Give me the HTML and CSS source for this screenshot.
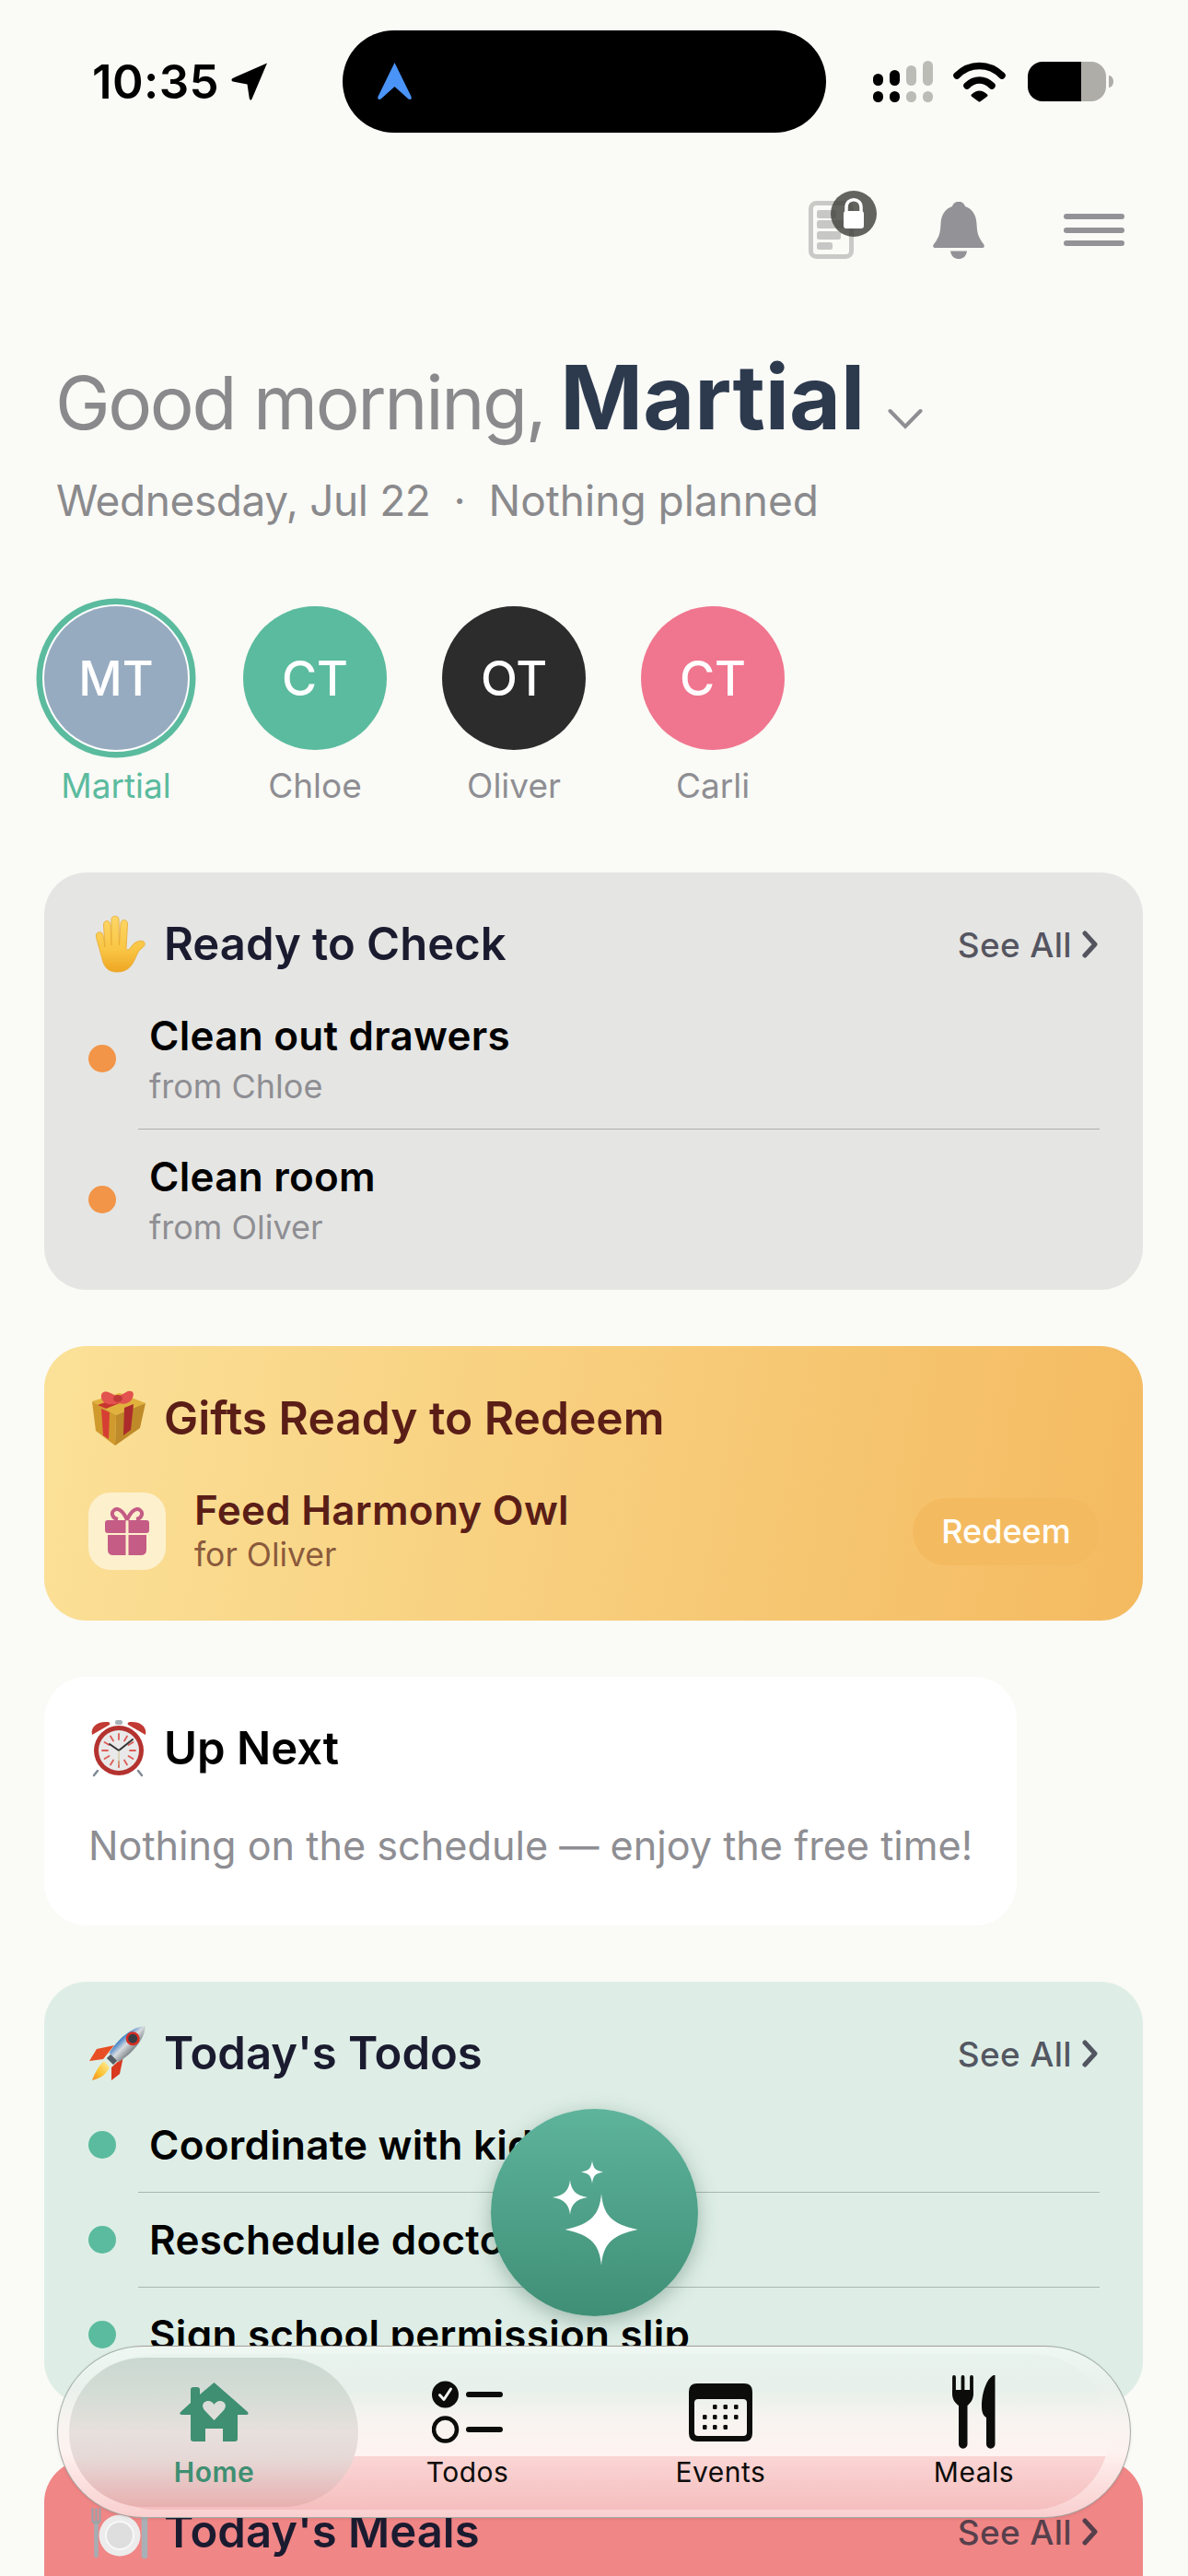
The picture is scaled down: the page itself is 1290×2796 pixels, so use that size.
FILE: index.html
```html
<!DOCTYPE html>
<html>

<head>
    <title>Home</title>
    <link rel="stylesheet" href="styles.css">
</head>

<body>
    <div class="screen">
        <div class="status">
            <div class="clock">
                <span>10:35</span>
                <svg width="41" height="41" viewBox="0 0 41 41"><path d="M39 0.6 L22.5 39.5 Q21 42 19.8 39 L17.5 23.5 L1.8 20.5 Q-0.8 19 1.5 17 Z" fill="#000"/></svg>
            </div>
            <div class="island">
                <svg width="37" height="41" viewBox="0 0 37 41"><path d="M18.5 0 L36.6 37 Q37.5 41 33.5 39.5 L18.5 26 L3.5 39.5 Q-0.5 41 0.4 37 Z" fill="#4a94f8"/></svg>
            </div>
            <div class="sysicons">
                <svg width="65" height="45" viewBox="0 0 65 45">
                    <rect x="0" y="14" width="11" height="13" rx="5.5"/>
                    <rect x="18" y="10" width="11" height="17" rx="5.5"/>
                    <rect x="36" y="5" width="11" height="22" rx="5.5" fill="#bcbcb6"/>
                    <rect x="54" y="0" width="11" height="27" rx="5.5" fill="#bcbcb6"/>
                    <rect x="0" y="33" width="11" height="12" rx="5.5"/>
                    <rect x="18" y="33" width="11" height="12" rx="5.5"/>
                    <rect x="36" y="33" width="11" height="12" rx="5.5" fill="#bcbcb6"/>
                    <rect x="54" y="33" width="11" height="12" rx="5.5" fill="#bcbcb6"/>
                </svg>
                <svg class="wifi" width="57" height="44" viewBox="0 0 57 44">
                    <path d="M4 15 C18 1 39 1 53 15" fill="none" stroke="#000" stroke-width="7.5" stroke-linecap="round"/>
                    <path d="M15 26 C23 18 34 18 42 26" fill="none" stroke="#000" stroke-width="7.5" stroke-linecap="round"/>
                    <path d="M21 36.5 Q28.5 29.5 36 36.5 L28.5 42 Z" stroke="#000" stroke-width="3" stroke-linejoin="round"/>
                </svg>
                <svg class="battery" width="93" height="43" viewBox="0 0 93 43">
                    <path d="M16 0 H58 V43 H16 A16 16 0 0 1 0 27 V16 A16 16 0 0 1 16 0Z"/>
                    <path d="M58 0 H69 A16 16 0 0 1 85 16 V27 A16 16 0 0 1 69 43 H58Z" fill="#aeada8"/>
                    <path d="M88 15 C91 15 93 18 93 21.5 C93 25 91 28 88 28Z" fill="#aeada8"/>
                </svg>
            </div>
        </div>

        <div class="topbar">
            <div class="doc">
                <svg width="49" height="63" viewBox="0 0 49 63">
                    <rect x="2.5" y="2.5" width="44" height="58" rx="6" fill="none" stroke="#c9c9c7" stroke-width="5"/>
                    <rect x="9" y="10" width="21" height="9" rx="2.5" fill="#c7c7c5"/>
                    <rect x="9" y="21" width="30" height="9" rx="2.5" fill="#c7c7c5"/>
                    <rect x="9" y="33" width="26" height="9" rx="2.5" fill="#c7c7c5"/>
                    <rect x="9" y="45" width="17" height="8" rx="2.5" fill="#c7c7c5"/>
                </svg>
                <div class="lock">
                    <svg width="50" height="50" viewBox="0 0 50 50">
                        <path d="M17 23 V18 C17 7 33 7 33 18 V23" fill="none" stroke="#fff" stroke-width="3.5"/>
                        <rect x="14" y="22" width="22" height="19" rx="3" fill="#fff"/>
                    </svg>
                </div>
            </div>
            <svg class="bell" width="56" height="62" viewBox="0 0 56 62">
                <path d="M28 0 C24 0 22 2 21 5 C13 8 9 14 8.5 24 C8 34 7 38 1 46 C-1 49 1 50 3 50 L53 50 C55 50 57 49 55 46 C49 38 48 34 47.5 24 C47 14 43 8 35 5 C34 2 32 0 28 0Z" fill="#929297"/>
                <path d="M19 53.5 L37 53.5 C36 60 32 62 28 62 C24 62 20 60 19 53.5Z" fill="#929297"/>
            </svg>
            <div class="menu"><span></span><span></span><span></span></div>
        </div>

        <div class="greeting">
            <span class="hello">Good morning,</span>
            <span class="name">Martial</span>
            <svg class="caret" width="38" height="23" viewBox="0 0 38 23"><path d="M2.5 3 L19 20 L35.5 3" fill="none" stroke="#8e8e93" stroke-width="4" stroke-linecap="round"/></svg>
        </div>
        <div class="subline"><span class="date">Wednesday, Jul 22</span> <span class="mid">·</span> Nothing planned</div>

        <div class="people">
            <div class="person active">
                <div class="avatar blue">MT</div>
                <div class="person-name">Martial</div>
            </div>
            <div class="person">
                <div class="avatar green">CT</div>
                <div class="person-name">Chloe</div>
            </div>
            <div class="person">
                <div class="avatar dark">OT</div>
                <div class="person-name">Oliver</div>
            </div>
            <div class="person">
                <div class="avatar pink">CT</div>
                <div class="person-name">Carli</div>
            </div>
        </div>

        <div class="cards">
            <section class="card check">
                <div class="card-head">
                    <svg class="emoji" width="62" height="62" viewBox="0 0 62 62">
                        <defs><linearGradient id="hand" x1="0" y1="0" x2="0" y2="1"><stop offset="0" stop-color="#fcd768"/><stop offset="0.6" stop-color="#f9c544"/><stop offset="1" stop-color="#eea622"/></linearGradient></defs>
                        <path transform="translate(7 0)" d="M3 18 C6 17 8 19 8.5 24 L10 34 L8.5 10 C8.5 4 15.5 4 16 10 L17 32 L17 4 C17 -1 25 -1 25 4 L25.5 32 L27 9 C27 3 34.5 3 34.5 9 L33 36 C35 38 37 36 39 33 C42 28 49 26 52 28 C55 31 52 34 49 36 C46 38 45 42 42 48 C38 57 32 61 23 61 C14 61 9 56 7 47 C5 39 2 30 0.5 23 C0 20 1 18.5 3 18Z" fill="url(#hand)" stroke="#e8a92e" stroke-width="0.8"/>
                    </svg>
                    <h2>Ready to Check</h2>
                    <a class="see-all">See All <svg width="17" height="30" viewBox="0 0 17 30"><path d="M3 3 L14 15 L3 27" fill="none" stroke="currentColor" stroke-width="5" stroke-linecap="round" stroke-linejoin="round"/></svg></a>
                </div>
                <div class="row tall">
                    <span class="dot orange"></span>
                    <div>
                        <div class="row-title">Clean out drawers</div>
                        <div class="row-sub">from Chloe</div>
                    </div>
                </div>
                <div class="rule"></div>
                <div class="row tall">
                    <span class="dot orange"></span>
                    <div>
                        <div class="row-title">Clean room</div>
                        <div class="row-sub">from Oliver</div>
                    </div>
                </div>
            </section>

            <section class="card gifts">
                <div class="card-head">
                    <svg class="emoji" width="62" height="62" viewBox="0 0 62 62">
                        <path d="M3 13 L33 4 L61 15 L29 28Z" fill="#e0b13c"/>
                        <path d="M3 13 L29 28 L28 61 L7 45Z" fill="#d09a2d"/>
                        <path d="M29 28 L61 15 L55 42 L28 61Z" fill="#bf8a29"/>
                        <path d="M9 17 L18 21 L43 11 L34 8Z" fill="#c8352f"/>
                        <path d="M13 21 L22 25 L21 54 L15 50Z" fill="#d63e34"/>
                        <path d="M38 20 L48 16 L45 44 L37 50Z" fill="#ac2b2b"/>
                        <path d="M32 15 C24 18 14 16 13 9 C12 2 18 1 23 4 L31 8 L40 3 C45 0 50 3 47 9 C45 15 38 17 32 15Z" fill="#e2524e"/>
                        <ellipse cx="31" cy="10" rx="5" ry="4" fill="#c23a38"/>
                    </svg>
                    <h2>Gifts Ready to Redeem</h2>
                </div>
                <div class="gift-row">
                    <div class="gift-tile">
                        <svg width="48" height="52" viewBox="0 0 48 52">
                            <path d="M24 14 C20 4 14 0 10 3 C6 6 8 12 14 13 M24 14 C28 4 34 0 38 3 C42 6 40 12 34 13" fill="none" stroke="#c45c85" stroke-width="4"/>
                            <path d="M3 14 H22.5 V28 H3 Q0 28 0 25 V17 Q0 14 3 14Z M25.5 14 H45 Q48 14 48 17 V25 Q48 28 45 28 H25.5Z" fill="#c45c85"/>
                            <path d="M3 30 H22.5 V52 H9 Q3 52 3 46Z M25.5 30 H45 V46 Q45 52 39 52 H25.5Z" fill="#c45c85"/>
                        </svg>
                    </div>
                    <div class="gift-text">
                        <div class="gift-title">Feed Harmony Owl</div>
                        <div class="gift-sub">for Oliver</div>
                    </div>
                    <div class="redeem">Redeem</div>
                </div>
            </section>

            <section class="card next">
                <div class="card-head">
                    <svg class="emoji" width="62" height="62" viewBox="0 0 62 62">
                        <path d="M9 55 L5 60 M53 55 L57 60" stroke="#7f8a94" stroke-width="2.5" stroke-linecap="round"/>
                        <path d="M3 16 C1 7 9 1 20 2 C22 2 23 4 22 5 Z" fill="#c23a34"/>
                        <path d="M61 16 C63 7 55 1 44 2 C42 2 41 4 42 5 Z" fill="#c23a34"/>
                        <rect x="28" y="0" width="8" height="5" rx="2" fill="#a7b2ba"/>
                        <circle cx="32" cy="33" r="27" fill="#b4322f"/>
                        <circle cx="32" cy="33" r="22" fill="#e9e9e9"/>
                        <g stroke="#dd5c55" stroke-width="1.8" stroke-linecap="round">
                            <path d="M32 15 V21 M32 45 V51 M14 33 H20 M44 33 H50 M23 17.500 L26 22.500 M41 17.500 L38 22.500 M16.500 24 L21.500 27 M47.500 24 L42.500 27 M16.500 42 L21.500 39 M47.500 42 L42.500 39 M23 48.500 L26 43.500 M41 48.500 L38 43.500"/>
                        </g>
                        <path d="M32 33 L22 26 M32 33 L47 21" stroke="#333" stroke-width="2" stroke-linecap="round"/>
                        <path d="M32 33 V49" stroke="#c9bd8e" stroke-width="1"/>
                    </svg>
                    <h2 class="black">Up Next</h2>
                </div>
                <p class="empty">Nothing on the schedule — enjoy the free time!</p>
            </section>

            <section class="card todos">
                <div class="card-head">
                    <svg class="emoji" width="62" height="62" viewBox="0 0 62 62">
                        <defs>
                            <linearGradient id="hull" x1="0" y1="0" x2="1" y2="0"><stop offset="0" stop-color="#3f7fc4"/><stop offset="0.45" stop-color="#d8dce0"/><stop offset="1" stop-color="#7d8488"/></linearGradient>
                            <linearGradient id="fire" x1="1" y1="0" x2="0" y2="1"><stop offset="0" stop-color="#fff1a8"/><stop offset="0.6" stop-color="#fbc030"/><stop offset="1" stop-color="#f08a20"/></linearGradient>
                        </defs>
                        <path d="M27 22 L8 26 L0 39 L15 37Z" fill="#e84f25"/>
                        <path d="M37 34 L33 53 L24 60 L24 46Z" fill="#d8391f"/>
                        <path d="M16 39 C10 44 6 52 3 60 C12 58 19 53 22 46Z" fill="url(#fire)"/>
                        <g transform="rotate(45 38 24)">
                            <path d="M38 -8 C48 2 49 24 45 40 H31 C27 24 28 2 38 -8Z" fill="url(#hull)"/>
                            <rect x="33" y="40" width="10" height="6" fill="#555e66"/>
                            <circle cx="38" cy="11" r="7.5" fill="#d82d22"/>
                            <circle cx="38" cy="11" r="5" fill="#3a3c44"/>
                        </g>
                    </svg>
                    <h2>Today's Todos</h2>
                    <a class="see-all">See All <svg width="17" height="30" viewBox="0 0 17 30"><path d="M3 3 L14 15 L3 27" fill="none" stroke="currentColor" stroke-width="5" stroke-linecap="round" stroke-linejoin="round"/></svg></a>
                </div>
                <div class="row">
                    <span class="dot mint"></span>
                    <div class="row-title">Coordinate with kids</div>
                </div>
                <div class="rule mintline"></div>
                <div class="row">
                    <span class="dot mint"></span>
                    <div class="row-title">Reschedule doctor</div>
                </div>
                <div class="rule mintline"></div>
                <div class="row">
                    <span class="dot mint"></span>
                    <div class="row-title">Sign school permission slip</div>
                </div>
            </section>

            <section class="card meals">
                <div class="card-head">
                    <svg class="emoji" width="64" height="62" viewBox="0 0 64 62">
                        <circle cx="33" cy="35" r="22.500" fill="#ececec"/>
                        <circle cx="33" cy="35" r="15" fill="#dedede" stroke="#f8f8f8" stroke-width="2"/>
                        <path d="M3.500 6 V20 M7.500 6 V20 M11.500 6 V20" stroke="#9aa3a8" stroke-width="2.200" stroke-linecap="round"/>
                        <path d="M3.500 19 C3.500 25 11.500 25 11.500 19 Z" fill="#9aa3a8"/>
                        <path d="M7.500 24 V57" stroke="#a4adb2" stroke-width="4.500" stroke-linecap="round"/>
                        <path d="M60 6 V57" stroke="#a9b0b5" stroke-width="6.500" stroke-linecap="round"/>
                    </svg>
                    <h2>Today's Meals</h2>
                    <a class="see-all">See All <svg width="17" height="30" viewBox="0 0 17 30"><path d="M3 3 L14 15 L3 27" fill="none" stroke="currentColor" stroke-width="5" stroke-linecap="round" stroke-linejoin="round"/></svg></a>
                </div>
            </section>
        </div>

        <button class="fab">
            <svg width="120" height="125" viewBox="0 0 120 125">
                <path d="M78 40 C80 62 88 73 117.500 79 C88 85 80 96 78 118 C76 96 68 85 38.500 79 C68 73 76 62 78 40Z" fill="#fff"/>
                <path d="M44 25 C45 36 50 42 63 44 C50 46 45 52 44 63 C43 52 38 46 25 44 C38 42 43 36 44 25Z" fill="#fff"/>
                <path d="M68 4 C69 12 71 15 80 16.500 C71 18 69 21 68 29 C67 21 65 18 56 16.500 C65 15 67 12 68 4Z" fill="#fff"/>
            </svg>
        </button>

        <nav class="tabbar">
            <div class="tab active">
                <div class="tab-icon">
                    <svg width="75" height="64" viewBox="0 0 75 64"><path fill-rule="evenodd" d="M37.500 0 L74 32 Q76 35 72 35 L63 35 L63 61 Q63 64 60 64 L47 64 L47 50 L28 50 L28 64 L15 64 Q12 64 12 61 L12 35 L3 35 Q-1 35 1 32 L12 22 L12 8 Q12 5 15 5 L19 5 Q22 5 22 8 L22 13 Z M37.500 41 L27 30 C23 25 26 20 31 20 C34 20 36.500 22 37.500 24 C38.500 22 41 20 44 20 C49 20 52 25 48 30 Z" fill="#3f8f72"/></svg>
                </div>
                <div class="tab-label">Home</div>
            </div>
            <div class="tab">
                <div class="tab-icon">
                    <svg width="77" height="68" viewBox="0 0 77 68">
                        <circle cx="14.500" cy="15" r="14.500" fill="#0c0c0a"/>
                        <path d="M8.500 15.500 L13 20.500 L20.500 9" fill="none" stroke="#f2f6f2" stroke-width="3" stroke-linecap="round" stroke-linejoin="round"/>
                        <circle cx="14.500" cy="53" r="12.500" fill="none" stroke="#0c0c0a" stroke-width="4.500"/>
                        <path d="M40 15 H74 M40 53 H74" stroke="#0c0c0a" stroke-width="6" stroke-linecap="round"/>
                    </svg>
                </div>
                <div class="tab-label">Todos</div>
            </div>
            <div class="tab">
                <div class="tab-icon">
                    <svg width="69" height="63" viewBox="0 0 69 63">
                        <path fill-rule="evenodd" d="M9 0 H60 Q69 0 69 9 V54 Q69 63 60 63 H9 Q0 63 0 54 V9 Q0 0 9 0Z M10 17 Q6 17 6 21 V53 Q6 57 10 57 H59 Q63 57 63 53 V21 Q63 17 59 17Z" fill="#0c0c0a"/>
                        <g fill="#0c0c0a">
                            <rect x="26" y="23" width="4.500" height="5" rx="1.200"/><rect x="37.500" y="23" width="4.500" height="5" rx="1.200"/><rect x="49" y="23" width="4.500" height="5" rx="1.200"/>
                            <rect x="15" y="34" width="4.500" height="5" rx="1.200"/><rect x="26" y="34" width="4.500" height="5" rx="1.200"/><rect x="37.500" y="34" width="4.500" height="5" rx="1.200"/><rect x="49" y="34" width="4.500" height="5" rx="1.200"/>
                            <rect x="15" y="45" width="4.500" height="5" rx="1.200"/><rect x="26" y="45" width="4.500" height="5" rx="1.200"/><rect x="37.500" y="45" width="4.500" height="5" rx="1.200"/>
                        </g>
                    </svg>
                </div>
                <div class="tab-label">Events</div>
            </div>
            <div class="tab">
                <div class="tab-icon">
                    <svg width="48" height="80" viewBox="0 0 48 80">
                        <path d="M2 2 V20 M11.500 2 V20 M21 2 V20" stroke="#0c0c0a" stroke-width="3.800" stroke-linecap="round"/>
                        <path d="M0 16 H23 V20 C23 27 19 31 16.500 33 V75 A4.750 4.750 0 0 1 7 75 V33 C4 31 0 27 0 20Z" fill="#0c0c0a"/>
                        <path d="M46.500 0 V75 A4.750 4.750 0 0 1 37 75 V46 C34 44 32 41 32 34 C32 18 38 3 45 0 Z" fill="#0c0c0a"/>
                    </svg>
                </div>
                <div class="tab-label">Meals</div>
            </div>
        </nav>
    </div>
</body>

</html>
```

FILE: styles.css
```css
* {
    box-sizing: border-box;
}

html,
body {
    margin: 0;
    padding: 0;
}

body {
    font-family: Inter, "Noto Sans", sans-serif;
    background-color: #fafaf6;
}

.screen {
    position: relative;
    width: 1290px;
    height: 2796px;
    overflow: hidden;
    background-color: #fafaf6;
}

/* status bar */
.status {
    display: flex;
    align-items: center;
    height: 111px;
    margin-top: 33px;
    padding-left: 100px;
}

.clock {
    display: flex;
    align-items: center;
    gap: 13px;
    width: 194px;
    margin-right: 78px;
    font-size: 51px;
    font-weight: 600;
    color: #000;
    letter-spacing: 0.4px;
}

.island {
    display: flex;
    align-items: center;
    width: 525px;
    height: 111px;
    padding-left: 38px;
    border-radius: 56px;
    background-color: #000;
    margin-right: 51px;
}

.sysicons {
    display: flex;
    align-items: center;
}

.wifi {
    margin-left: 22px;
}

.battery {
    margin-left: 24px;
}

/* top icons */
.topbar {
    display: flex;
    justify-content: flex-end;
    align-items: center;
    height: 63px;
    margin-top: 74px;
    padding-right: 69px;
}

.doc {
    position: relative;
    width: 49px;
    height: 63px;
    margin-right: 86px;
}

.doc svg {
    display: block;
}

.lock {
    position: absolute;
    left: 24px;
    top: -11px;
    width: 50px;
    height: 50px;
    border-radius: 50%;
    background-color: rgba(66, 66, 62, 0.82);
}

.bell {
    margin-right: 86px;
}

.menu {
    display: flex;
    flex-direction: column;
    gap: 8.5px;
    width: 66px;
}

.menu span {
    height: 6px;
    border-radius: 3px;
    background-color: #929297;
}

/* greeting */
.greeting {
    display: flex;
    align-items: baseline;
    margin-top: 95px;
    padding-left: 60px;
    line-height: 110px;
}

.hello {
    font-size: 80px;
    color: #8a8a8d;
    letter-spacing: -2.4px;
}

.name {
    margin-left: 17px;
    font-size: 96.5px;
    font-weight: 700;
    color: #2d3a4e;
}

.caret {
    margin-left: 25px;
}

.subline {
    margin-top: 23px;
    padding-left: 61px;
    font-size: 46px;
    line-height: 56px;
    color: #8a8a8d;
}

.date {
    letter-spacing: -0.4px;
}

.mid {
    margin: 0 12px;
}

/* people */
.people {
    display: flex;
    gap: 60px;
    margin-top: 87px;
    padding-left: 48px;
}

.person {
    width: 156px;
    text-align: center;
}

.avatar {
    display: flex;
    align-items: center;
    justify-content: center;
    width: 156px;
    height: 156px;
    border-radius: 50%;
    font-size: 52px;
    font-weight: 500;
    color: #fff;
}

.active .avatar {
    box-shadow: 0 0 0 2px #fff, 0 0 0 8.5px #5bbb9e;
}

.blue {
    background-color: #97abc0;
}

.green {
    background-color: #5bbb9e;
}

.dark {
    background-color: #2c2c2c;
}

.pink {
    background-color: #f0758e;
}

.person-name {
    margin-top: 17px;
    font-size: 37px;
    line-height: 44px;
    color: #8e8e93;
}

.person.active .person-name {
    color: #5bbb9e;
}

/* cards */
.cards {
    display: flex;
    flex-direction: column;
    align-items: flex-start;
    gap: 61px;
    margin-top: 72px;
    padding: 0 49px 0 48px;
}

.card {
    width: 100%;
    padding: 48px 47px 22px 48px;
    border-radius: 46px;
}

.card-head {
    display: flex;
    align-items: center;
    height: 60px;
    margin-bottom: 18px;
}

.emoji {
    flex: none;
    margin-right: 19px;
    margin-left: 1px;
}

.meals .emoji {
    margin-right: 17px;
}

h2 {
    margin: 0;
    font-size: 49px;
    font-weight: 600;
    line-height: 60px;
    color: #1b1b30;
}

.see-all {
    display: flex;
    align-items: center;
    gap: 11px;
    margin-left: auto;
    margin-right: 2px;
    font-size: 37px;
    font-weight: 500;
    letter-spacing: 0.3px;
    color: rgba(45, 45, 60, 0.79);
}

.row {
    display: flex;
    align-items: center;
    height: 102px;
}

.row.tall {
    height: 152px;
}

.dot {
    flex: none;
    width: 30px;
    height: 30px;
    margin-right: 36px;
    border-radius: 50%;
}

.orange {
    background-color: #f29548;
}

.mint {
    background-color: #5bbb9e;
}

.row-title {
    font-size: 44px;
    font-weight: 580;
    letter-spacing: 0.25px;
    line-height: 52px;
    color: #000;
    white-space: nowrap;
}

.row-sub {
    margin-top: 7px;
    font-size: 36px;
    line-height: 44px;
    color: #8e8e93;
}

.rule {
    height: 1px;
    margin-left: 54px;
    background-color: #aeaeac;
}

.mintline {
    background-color: #a6b7b0;
}

.check {
    background-color: #e5e5e3;
}

.gifts {
    height: 298px;
    padding-bottom: 0;
    background: linear-gradient(100deg, #fbe198 0%, #f4ba60 100%);
}

.gifts h2 {
    font-size: 49.7px;
    color: #5a1e17;
}

.gift-row {
    display: flex;
    align-items: center;
    margin-top: 45px;
}

.gift-tile {
    display: flex;
    align-items: center;
    justify-content: center;
    width: 84px;
    height: 84px;
    border-radius: 24px;
    background-color: #fdf0cd;
}

.gift-text {
    margin-left: 31px;
}

.gift-title {
    font-size: 44px;
    font-weight: 580;
    letter-spacing: 0.25px;
    line-height: 50px;
    color: #5a1e17;
}

.gift-sub {
    margin-top: 2px;
    font-size: 35.5px;
    line-height: 44px;
    color: #8b5a3c;
}

.redeem {
    margin-left: auto;
    width: 203px;
    height: 73px;
    border-radius: 37px;
    font-size: 36px;
    font-weight: 500;
    line-height: 73px;
    text-align: center;
    color: #fff;
    background-color: #f4ba60;
}

.next {
    width: auto;
    height: 270px;
    padding-right: 48px;
    padding-bottom: 0;
    background-color: #fff;
}

h2.black {
    color: #000;
}

.empty {
    margin: 47px 0 0;
    font-size: 43.2px;
    line-height: 56px;
    color: #8e8e93;
}

.todos {
    padding-bottom: 24px;
    background-color: #deeee6;
}

.meals {
    height: 300px;
    background-color: #f08686;
}

/* floating button */
.fab {
    position: absolute;
    left: 533px;
    top: 2289px;
    display: flex;
    align-items: center;
    justify-content: center;
    width: 225px;
    height: 225px;
    padding: 4px 22px 0 0;
    border: none;
    border-radius: 50%;
    background: linear-gradient(#5eb39b, #3f8f76);
    box-shadow: 0 6px 22px rgba(40, 80, 65, 0.35);
}

/* tab bar */
.tabbar {
    position: absolute;
    left: 62px;
    top: 2546px;
    display: flex;
    width: 1166px;
    height: 187px;
    padding-left: 32px;
    border: 1px solid rgba(110, 125, 118, 0.6);
    border-radius: 94px;
    background: linear-gradient(#eef7f2 0%, #eaf1ec 25%, #f8f4f0 45%, #fdf2ef 62%, #fce4e3 75%, #f9cfcf 100%);
    box-shadow: 0 1px 3px rgba(60, 60, 60, 0.12);
}

.tabbar::before {
    content: "";
    position: absolute;
    left: 22px;
    right: 22px;
    top: 8px;
    bottom: 8px;
    border-radius: 86px;
    background: linear-gradient(#e9f3ed 0%, #e7f0ea 22%, #f7f4f0 42%, #fef3f0 65.500%, #fad6d5 65.500%, #f5bebe 100%);
}

.tab {
    position: relative;
    width: 275px;
    text-align: center;
}

.tab.active::before {
    content: "";
    position: absolute;
    left: -20px;
    top: 12px;
    width: 314px;
    height: 162px;
    border-radius: 81px;
    background: linear-gradient(#c9d8d0 0%, #d5dcd6 25%, #e7e0dc 50%, #e6d8d6 68%, #e8b0b0 100%);
}

.tab-icon {
    position: relative;
    display: flex;
    align-items: center;
    justify-content: center;
    height: 84px;
    margin-top: 29px;
}

.tab-icon svg {
    display: block;
}

.tab-label {
    position: relative;
    margin-top: 5px;
    font-size: 30px;
    letter-spacing: 0.5px;
    line-height: 36px;
    color: #0c0c0a;
}

.tab.active .tab-label {
    font-weight: 600;
    color: #3f8f72;
}
```
